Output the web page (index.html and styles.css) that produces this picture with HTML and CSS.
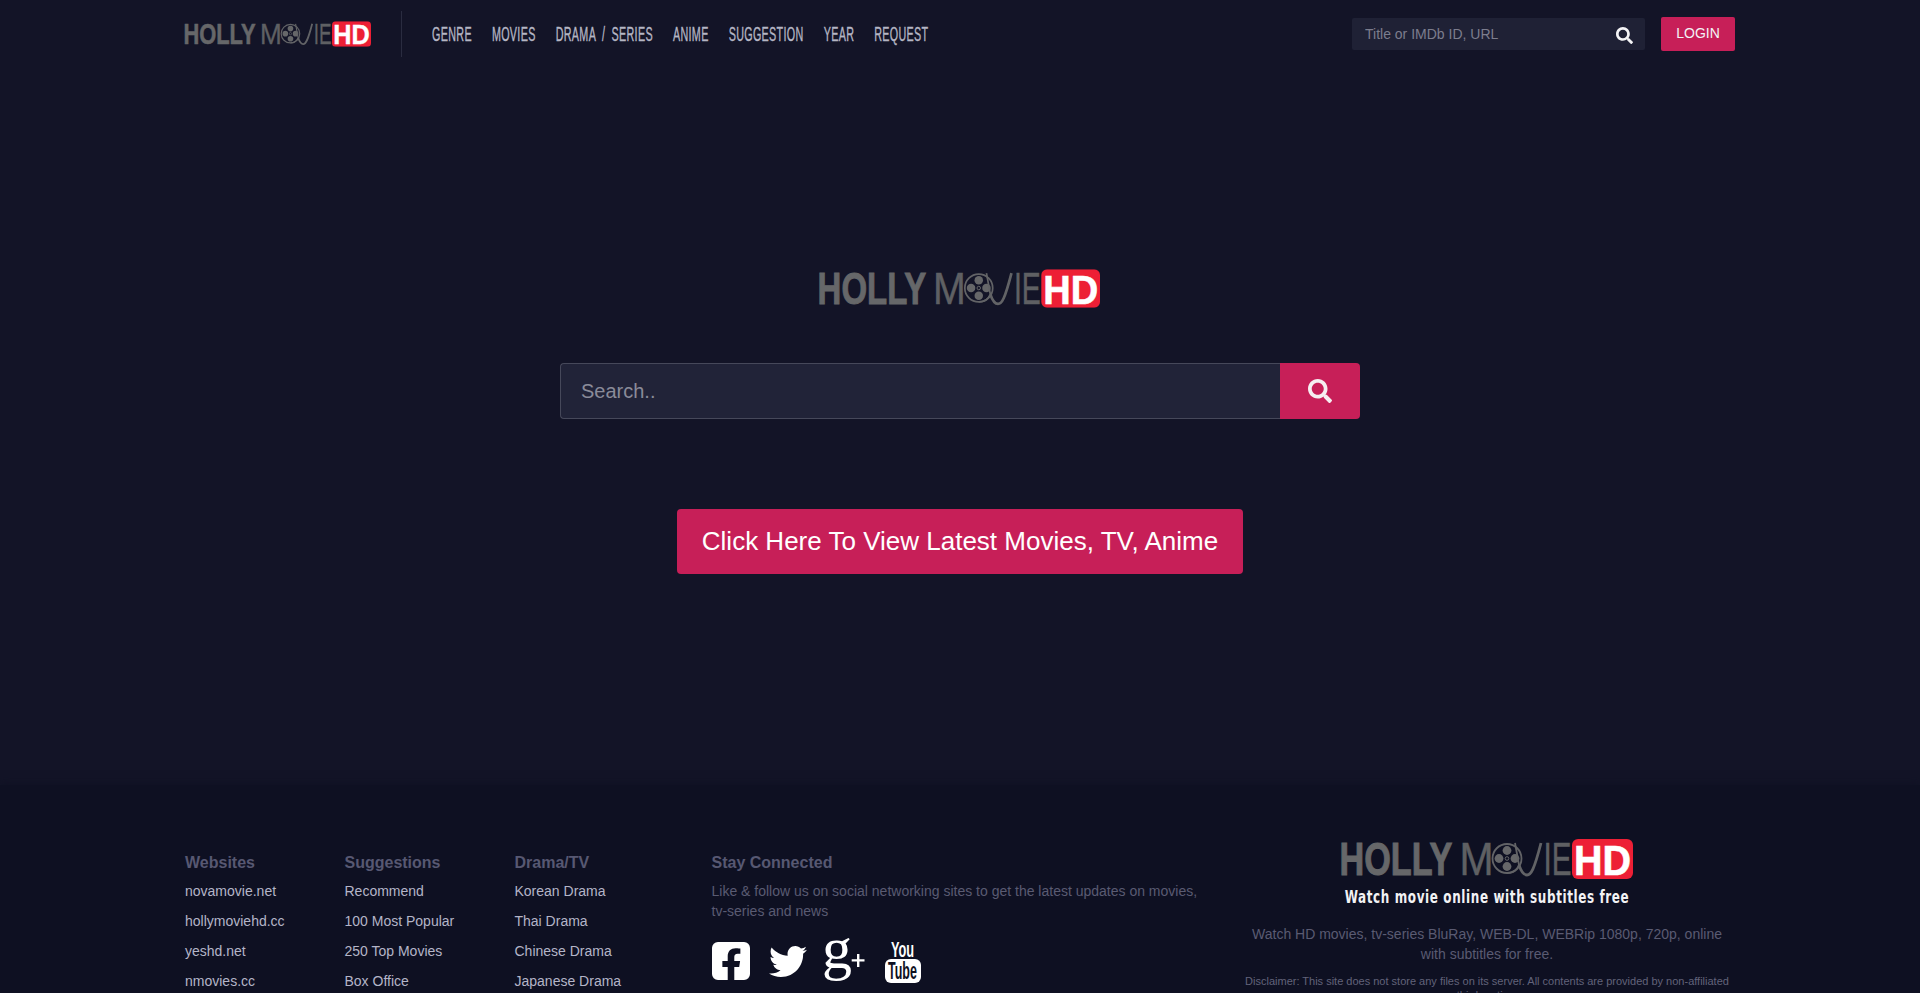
FILE: index.html
```html
<!DOCTYPE html>
<html lang="en">
<head>
<meta charset="utf-8">
<title>HollyMovieHD</title>
<link rel="stylesheet" href="styles.css">
</head>
<body>
<svg class="defs" width="0" height="0" aria-hidden="true">
  <symbol id="reel" viewBox="0 0 291 40">
    <circle class="lg-ring" cx="165" cy="19.5" r="14.5"/>
    <circle class="lg-fill" cx="165" cy="11.5" r="4.4"/>
    <circle class="lg-fill" cx="165" cy="27.5" r="4.4"/>
    <circle class="lg-fill" cx="157" cy="19.5" r="4.4"/>
    <circle class="lg-fill" cx="173" cy="19.5" r="4.4"/>
    <circle class="lg-hub" cx="165" cy="19.5" r="1.8"/>
    <path class="lg-ring" d="M165 34c7 0 10-3 12-8l-4-22"/>
    <path class="lg-vee" d="M177 26c2 6 5 10 8 10 4 0 7-5 14-32"/>
    <rect class="lg-box" x="230" y="0" width="61" height="40" rx="6"/>
  </symbol>
  <symbol id="search" viewBox="0 0 512 512">
    <path d="M505 442.7L405.3 343c-4.5-4.5-10.6-7-17-7H372c27.6-35.3 44-79.7 44-128C416 93.1 322.9 0 208 0S0 93.1 0 208s93.1 208 208 208c48.3 0 92.7-16.4 128-44v16.3c0 6.4 2.5 12.5 7 17l99.7 99.7c9.4 9.4 24.6 9.4 33.9 0l28.3-28.3c9.4-9.4 9.4-24.6.1-34zM208 336c-70.7 0-128-57.2-128-128 0-70.7 57.2-128 128-128 70.7 0 128 57.2 128 128 0 70.7-57.2 128-128 128z"/>
  </symbol>
</svg>

<header class="topbar">
  <a class="top-logo" href="#"><svg class="logo-svg" viewBox="0 0 291 40"><use href="#reel"/><text class="lg-bold" transform="translate(-2.5 36) scale(.729 1)">HOLLY</text><text class="lg-thin" transform="translate(117.5 36) scale(.87 1)">M</text><text class="lg-thin" transform="translate(201.5 36) scale(.63 1)">IE</text><text class="lg-hd" transform="translate(232 36) scale(.92 1)">HD</text></svg></a>
  <nav class="nav">
    <a href="#"><span>GENRE</span></a>
    <a href="#"><span>MOVIES</span></a>
    <a href="#"><span>DRAMA / SERIES</span></a>
    <a href="#"><span>ANIME</span></a>
    <a href="#"><span>SUGGESTION</span></a>
    <a href="#"><span>YEAR</span></a>
    <a href="#"><span>REQUEST</span></a>
  </nav>
  <div class="top-right">
    <form class="top-search">
      <input type="text" placeholder="Title or IMDb ID, URL">
      <svg class="top-search-icon"><use href="#search"/></svg>
    </form>
    <a class="login" href="#">LOGIN</a>
  </div>
</header>

<main class="hero">
  <a class="hero-logo" href="#"><svg class="logo-svg" viewBox="0 0 291 40"><use href="#reel"/><text class="lg-bold" transform="translate(-2.5 36) scale(.729 1)">HOLLY</text><text class="lg-thin" transform="translate(117.5 36) scale(.87 1)">M</text><text class="lg-thin" transform="translate(201.5 36) scale(.63 1)">IE</text><text class="lg-hd" transform="translate(232 36) scale(.92 1)">HD</text></svg></a>
  <form class="hero-search">
    <input type="text" placeholder="Search..">
    <button type="button" aria-label="Search"><svg class="hero-search-icon"><use href="#search"/></svg></button>
  </form>
  <a class="cta" href="#">Click Here To View Latest Movies, TV, Anime</a>
</main>

<footer class="footer">
  <div class="col">
    <h4>Websites</h4>
    <ul>
      <li><a href="#">novamovie.net</a></li>
      <li><a href="#">hollymoviehd.cc</a></li>
      <li><a href="#">yeshd.net</a></li>
      <li><a href="#">nmovies.cc</a></li>
    </ul>
  </div>
  <div class="col">
    <h4>Suggestions</h4>
    <ul>
      <li><a href="#">Recommend</a></li>
      <li><a href="#">100 Most Popular</a></li>
      <li><a href="#">250 Top Movies</a></li>
      <li><a href="#">Box Office</a></li>
    </ul>
  </div>
  <div class="col">
    <h4>Drama/TV</h4>
    <ul>
      <li><a href="#">Korean Drama</a></li>
      <li><a href="#">Thai Drama</a></li>
      <li><a href="#">Chinese Drama</a></li>
      <li><a href="#">Japanese Drama</a></li>
    </ul>
  </div>
  <div class="col">
    <h4>Stay Connected</h4>
    <p class="stay">Like &amp; follow us on social networking sites to get the latest updates on movies, tv-series and news</p>
    <div class="social">
      <a href="#" aria-label="Facebook"><svg class="ic-fb" viewBox="0 32 448 448"><path d="M378 32H70A70 70 0 0 0 0 102v308a70 70 0 0 0 70 70h115.25V327.69h-63V256h63v-54.64c0-62.15 37-96.48 93.67-96.48 27.14 0 55.52 4.84 55.52 4.84v61h-31.27c-30.81 0-40.42 19.12-40.42 38.73V256h68.78l-11 71.69h-57.78V480H378a70 70 0 0 0 70-70V102a70 70 0 0 0-70-70z"/></svg></a>
      <a href="#" aria-label="Twitter"><svg class="ic-tw" viewBox="0 48 512 416"><path d="M459.37 151.716c.325 4.548.325 9.097.325 13.645 0 138.72-105.583 298.558-298.558 298.558-59.452 0-114.68-17.219-161.137-47.106 8.447.974 16.568 1.299 25.34 1.299 49.055 0 94.213-16.568 130.274-44.832-46.132-.975-84.792-31.188-98.112-72.772 6.498.974 12.995 1.624 19.818 1.624 9.421 0 18.843-1.3 27.614-3.573-48.081-9.747-84.143-51.98-84.143-102.985v-1.299c13.969 7.797 30.214 12.67 47.431 13.319-28.264-18.843-46.781-51.005-46.781-87.391 0-19.492 5.197-37.36 14.294-52.954 51.655 63.675 129.3 105.258 216.365 109.807-1.624-7.797-2.599-15.918-2.599-24.04 0-57.828 46.782-104.934 104.934-104.934 30.213 0 57.502 12.67 76.67 33.137 23.715-4.548 46.456-13.32 66.599-25.34-7.798 24.366-24.366 44.833-46.132 57.827 21.117-2.273 41.584-8.122 60.426-16.243-14.292 20.791-32.161 39.308-52.628 54.253z"/></svg></a>
      <a href="#" aria-label="Google Plus"><svg class="ic-gp" viewBox="0 0 40 41"><text class="gp-g" x="-4" y="27">g</text><path d="M31 13h2.4v5.2h5.1v2.4h-5.1v5.4H31v-5.4h-5.3v-2.4H31z"/></svg></a>
      <a href="#" aria-label="YouTube"><svg class="ic-yt" viewBox="0 0 36 44"><text class="yt-you" transform="translate(6 18) scale(.58 1)">You</text><rect x="0" y="20" width="36" height="24" rx="6"/><text class="yt-tube" transform="translate(3 40) scale(.52 1)">Tube</text></svg></a>
    </div>
  </div>
  <div class="about">
    <a class="foot-logo" href="#"><svg class="logo-svg" viewBox="0 0 291 40"><use href="#reel"/><text class="lg-bold" transform="translate(-2.5 36) scale(.729 1)">HOLLY</text><text class="lg-thin" transform="translate(117.5 36) scale(.87 1)">M</text><text class="lg-thin" transform="translate(201.5 36) scale(.63 1)">IE</text><text class="lg-hd" transform="translate(232 36) scale(.92 1)">HD</text></svg></a>
    <div class="tagline"><span>Watch movie online with subtitles free</span></div>
    <p class="desc">Watch HD movies, tv-series BluRay, WEB-DL, WEBRip 1080p, 720p, online with subtitles for free.</p>
    <p class="disclaimer">Disclaimer: This site does not store any files on its server. All contents are provided by non-affiliated third parties.</p>
  </div>
</footer>
</body>
</html>
```
FILE: styles.css
```css
* { box-sizing: border-box; }
html, body { margin: 0; padding: 0; height: 993px; overflow: hidden; }
body {
  background: #131427;
  font-family: "Liberation Sans", Arial, sans-serif;
  color: #fff;
}
a { text-decoration: none; color: inherit; }
.defs { display: block; height: 0; position: absolute; }
.logo-svg { display: block; width: 100%; height: 100%; overflow: visible; }

.lg-bold { font: 700 47px "Liberation Sans", sans-serif; fill: #666769; stroke: #666769; stroke-width: 1; }
.lg-thin { font: 400 47px "Liberation Sans", sans-serif; fill: #5f6063; stroke: #5f6063; stroke-width: .5; }
.lg-hd { font: 700 43px "Liberation Sans", sans-serif; fill: #fff; stroke: #fff; stroke-width: .6; }
.lg-box { fill: #ed1f35; }
.lg-ring { fill: none; stroke: #626366; stroke-width: 1.8; }
.lg-vee { fill: none; stroke: #626366; stroke-width: 2.8; }
.lg-fill { fill: #666769; }
.lg-hub { fill: none; stroke: #666769; stroke-width: 1; }

.topbar {
  display: flex;
  align-items: center;
  height: 68px;
  padding: 0 185px;
}
.top-logo { display: block; width: 186px; height: 26px; margin-right: 30px; }
.nav {
  display: flex;
  align-items: center;
  gap: 20px;
  height: 46px;
  padding-left: 30px;
  border-left: 1px solid #2a2c40;
}
.nav a {
  display: block;
  font-family: "Liberation Sans", sans-serif;
  font-size: 10.75px;
  letter-spacing: .33px;
  word-spacing: 3px;
  color: #b5b6c4;
  white-space: nowrap;
  -webkit-text-stroke: .2px #b5b6c4;
}
.nav span { display: inline-block; transform: scaleY(1.8); }
.top-right { margin-left: auto; display: flex; align-items: center; gap: 16px; }
.top-search { position: relative; width: 293px; height: 32px; }
.top-search input {
  width: 100%;
  height: 100%;
  padding: 0 40px 0 13px;
  background: #1f2135;
  border: 0;
  border-radius: 2px;
  font: 14px "Liberation Sans", sans-serif;
  color: #fff;
}
.top-search input::placeholder { color: #7c7d8d; opacity: 1; }
.top-search-icon { position: absolute; top: 9px; right: 12px; width: 17px; height: 17px; fill: #f4f4f6; }
.login {
  display: block;
  width: 74px;
  height: 34px;
  line-height: 32px;
  text-align: center;
  background: #c71f58;
  border-radius: 2px;
  font-size: 14px;
  color: #f3f3f6;
}

.hero {
  display: flex;
  flex-direction: column;
  align-items: center;
  height: 717px;
  padding-top: 201px;
}
.hero-logo { display: block; width: 280px; height: 39px; }
.hero-search {
  display: flex;
  width: 800px;
  height: 56px;
  margin-top: 55px;
}
.hero-search input {
  flex: 1;
  min-width: 0;
  height: 100%;
  padding: 0 20px;
  background: #212338;
  border: 1px solid #46485a;
  border-right: 0;
  border-radius: 4px 0 0 4px;
  font: 20px "Liberation Sans", sans-serif;
  color: #fff;
}
.hero-search input::placeholder { color: #8a8b99; opacity: 1; }
.hero-search button {
  display: flex;
  align-items: center;
  justify-content: center;
  width: 80px;
  height: 100%;
  padding: 0;
  background: #c71f58;
  border: 0;
  border-radius: 0 4px 4px 0;
}
.hero-search-icon { width: 24px; height: 24px; fill: #f6eef1; }
.cta {
  display: block;
  margin-top: 90px;
  height: 65px;
  line-height: 65px;
  padding: 0 25px;
  background: #c71f58;
  border-radius: 4px;
  font-size: 26px;
  color: #fff;
  white-space: nowrap;
}

.footer {
  display: grid;
  grid-template-columns: 159.5px 170px 197px 1fr 490px;
  height: 208px;
  padding: 54px 188px 0 185px;
  background: #0e1022;
  box-shadow: 0 0 10px #0e1022;
  overflow: hidden;
}
.col { padding-top: 14px; }
.col h4 {
  margin: 0 0 3px;
  font-size: 16px;
  line-height: 20px;
  font-weight: 700;
  color: #575872;
}
.col ul { margin: 0; padding: 0; list-style: none; }
.col li { height: 30px; line-height: 30px; font-size: 14px; color: #b4b5c8; white-space: nowrap; }
.stay {
  margin: 0;
  padding-top: 5px;
  width: 490px;
  font-size: 14px;
  line-height: 20px;
  color: #5a5b72;
}
.social { display: flex; align-items: center; gap: 19px; margin-top: 18px; fill: #fff; }
.social a { display: block; }
.social svg { display: block; overflow: visible; }
.ic-fb { width: 38px; height: 38px; }
.ic-tw { width: 38px; height: 31px; }
.ic-gp { width: 40px; height: 41px; }
.ic-yt { width: 36px; height: 44px; }
.gp-g { font: 400 60px "Liberation Serif", serif; }
.yt-you { font: 700 22px "Liberation Sans", sans-serif; }
.yt-tube { font: 700 24px "Liberation Sans", sans-serif; fill: #0e1022; }

.about { text-align: center; }
.foot-logo { display: block; width: 291px; height: 40px; margin: 0 auto; }
.tagline {
  margin-top: 9px;
  font-family: "DejaVu Sans", sans-serif;
  font-size: 12px;
  line-height: 18px;
  font-weight: 700;
  letter-spacing: .6px;
  color: #f2f2f4;
  white-space: nowrap;
}
.tagline span { display: inline-block; transform: scaleY(1.4); }
.desc {
  margin: 18px 0 0;
  font-size: 14px;
  line-height: 20px;
  color: #5a5b72;
}
.disclaimer {
  margin: 10px 0 0;
  font-size: 11px;
  line-height: 14px;
  color: #62637a;
}
```
